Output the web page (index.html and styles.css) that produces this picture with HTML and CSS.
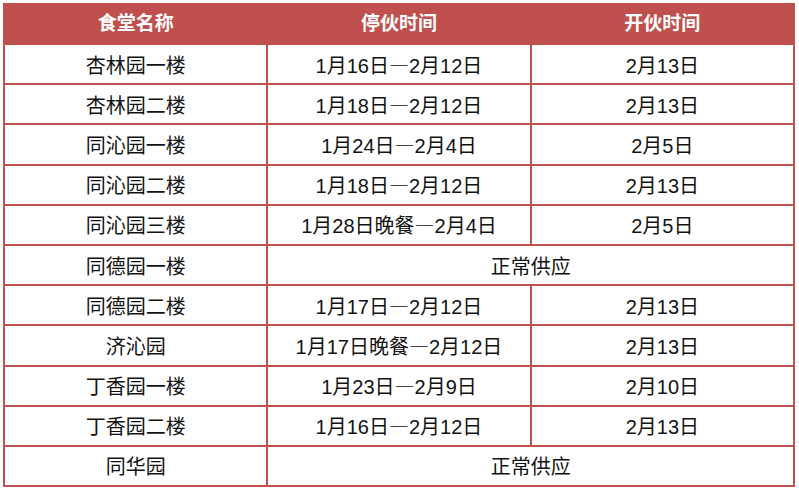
FILE: index.html
```html
<!DOCTYPE html>
<html lang="zh-CN">
<head>
<meta charset="utf-8">
<title>食堂停伙时间</title>
<link rel="stylesheet" href="styles.css">
</head>
<body>
<table class="schedule">
  <thead>
    <tr class="head-row"><th>食堂名称</th><th>停伙时间</th><th>开伙时间</th></tr>
  </thead>
  <tbody>
    <tr><td>杏林园一楼</td><td>1月16日<span class="dash">—</span>2月12日</td><td>2月13日</td></tr>
    <tr><td>杏林园二楼</td><td>1月18日<span class="dash">—</span>2月12日</td><td>2月13日</td></tr>
    <tr><td>同沁园一楼</td><td>1月24日<span class="dash">—</span>2月4日</td><td>2月5日</td></tr>
    <tr><td>同沁园二楼</td><td>1月18日<span class="dash">—</span>2月12日</td><td>2月13日</td></tr>
    <tr><td>同沁园三楼</td><td>1月28日晚餐<span class="dash">—</span>2月4日</td><td>2月5日</td></tr>
    <tr><td>同德园一楼</td><td colspan="2">正常供应</td></tr>
    <tr><td>同德园二楼</td><td>1月17日<span class="dash">—</span>2月12日</td><td>2月13日</td></tr>
    <tr><td>济沁园</td><td>1月17日晚餐<span class="dash">—</span>2月12日</td><td>2月13日</td></tr>
    <tr><td>丁香园一楼</td><td>1月23日<span class="dash">—</span>2月9日</td><td>2月10日</td></tr>
    <tr><td>丁香园二楼</td><td>1月16日<span class="dash">—</span>2月12日</td><td>2月13日</td></tr>
    <tr><td>同华园</td><td colspan="2">正常供应</td></tr>
  </tbody>
</table>
</body>
</html>
```
FILE: styles.css
```css
html, body {
  margin: 0;
  padding: 0;
  background: #ffffff;
}
body {
  padding: 3px 0 0 3px;
  font-family: "Liberation Sans", "Noto Sans CJK SC", sans-serif;
}
.schedule {
  border-collapse: collapse;
  width: 792px;
  table-layout: fixed;
  font-size: 20px;
  color: #121212;
}
.schedule th,
.schedule td {
  box-sizing: border-box;
  border: 2px solid #c0504d;
  text-align: center;
  vertical-align: middle;
  padding: 0;
  line-height: 20px;
}
.schedule th {
  background: #c0504d;
  color: #ffffff;
  font-weight: bold;
  font-size: 19px;
  height: 40px;
}
.schedule td {
  height: 40.2px;
  padding-top: 3px;
}
.dash {
  font-family: "Noto Sans CJK SC", sans-serif;
  line-height: 0;
}
```
